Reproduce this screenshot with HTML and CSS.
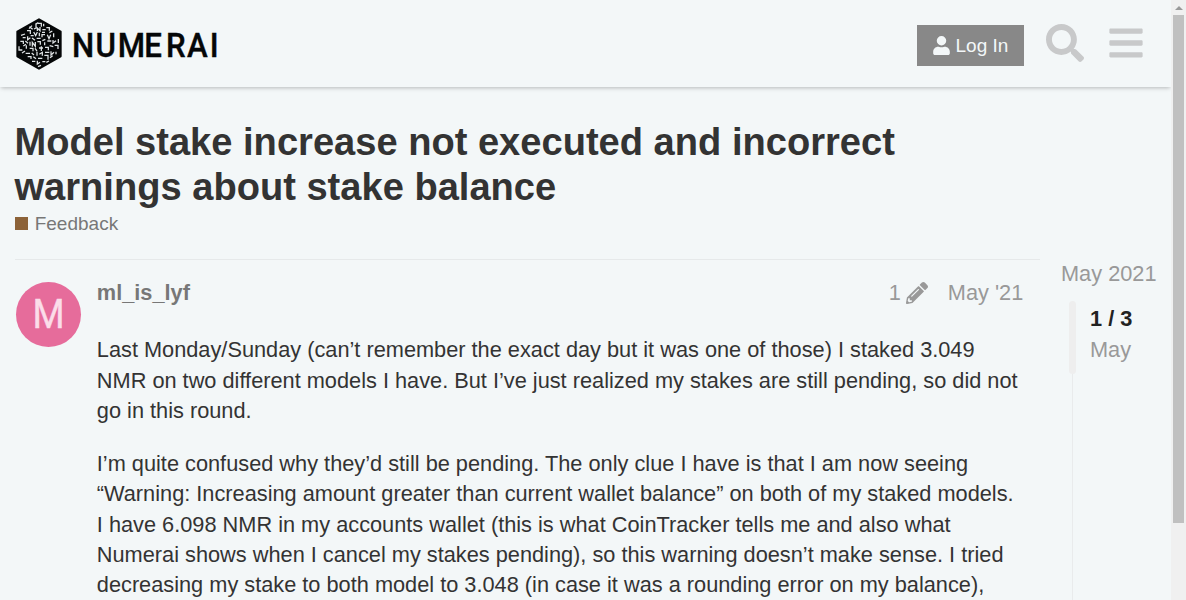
FILE: index.html
```
<!DOCTYPE html>
<html lang="en">
<head>
<meta charset="utf-8">
<title>Model stake increase not executed and incorrect warnings about stake balance</title>
<link rel="stylesheet" href="styles.css">
</head>
<body>
<div class="page">
  <header class="header">
    <a class="brand">
      <svg class="mark" viewBox="0 0 138 156" aria-hidden="true">
        <path d="M69 4 134 41V115L69 152 4 115V41Z" fill="#050708" stroke="#050708" stroke-width="6" stroke-linejoin="round"/>
        <path class="runes" d="M58 19l9-5M60 28V18M66 16h10v10M83 17v8M48 23l-9 9M40 26l10 8M54 33l8-4M64 39V30l8 8V27M79 35h10M91 29h9v9M100 44l9-5M33 38h10v10M44 53h9M53 42l6 11 5-11M70 44v11M78 43h9M87 50h-9v8M94 50l5 12 5-12M113 46v12M15 52l12-4M20 59h9M35 55v10l8-6M48 60l9 7M62 61h12M13 70h9v8M28 69l8 7M42 71v12M49 86V73l9 12V72M64 71h9v9M79 68l9-4M86 73v9M94 69h12M111 66v9l9-7M127 63v12M9 85v11h10M22 84l8-5M31 92V82M41 91h10v9M57 91l6 8M69 90h12M76 85v14M87 88h10v9M101 83l11 3M116 82h10v11M18 105l9-6M29 106h13M47 105l7 6M63 101v12M70 109l9-6v10M87 103h13M105 100v11l9-8M120 101v8M35 116h10v7M52 116l8 6M66 121h13M85 112h11v13M102 119l8-6M48 130h10M64 128v10l8-5M79 131h9M91 133l8-4M66 146l9-4"/>
      </svg>
      <svg class="wordmark" viewBox="0 0 160 44" role="img" aria-label="NUMERAI"><text class="wordmark-text" transform="scale(.92 1)" x="2.200 27.700 51.800 80.600 104.300 127.200 151.900" y="34">NUMERAI</text></svg>
    </a>
    <div class="tools">
      <button class="login"><svg class="user-icon" viewBox="0 0 448 512"><path fill="currentColor" d="M224 256a128 128 0 1 0 0-256 128 128 0 0 0 0 256zm90 32h-17a174 174 0 0 1-146 0h-17C60 288 0 348 0 422v42c0 27 21 48 48 48h352c27 0 48-21 48-48v-42c0-74-60-134-134-134z"/></svg><span>Log In</span></button>
      <svg class="search-icon" viewBox="0 0 512 512"><path fill="currentColor" d="M505 442.700 405.300 343c-4.500-4.500-10.600-7-17-7H372c27.600-35.300 44-79.700 44-128C416 93.100 322.900 0 208 0S0 93.100 0 208s93.100 208 208 208c48.300 0 92.700-16.400 128-44v16.300c0 6.400 2.500 12.500 7 17l99.700 99.700c9.400 9.400 24.600 9.400 33.900 0l28.300-28.300c9.400-9.400 9.400-24.600.1-34zM208 336c-70.700 0-128-57.200-128-128 0-70.700 57.200-128 128-128 70.700 0 128 57.200 128 128 0 70.700-57.200 128-128 128z"/></svg>
      <svg class="menu-icon" viewBox="0 0 448 512"><path fill="currentColor" d="M16 132h416c8.800 0 16-7.200 16-16V76c0-8.800-7.200-16-16-16H16C7.200 60 0 67.200 0 76v40c0 8.800 7.200 16 16 16zm0 160h416c8.800 0 16-7.200 16-16v-40c0-8.800-7.200-16-16-16H16c-8.800 0-16 7.200-16 16v40c0 8.800 7.200 16 16 16zm0 160h416c8.800 0 16-7.200 16-16v-40c0-8.800-7.200-16-16-16H16c-8.800 0-16 7.200-16 16v40c0 8.800 7.200 16 16 16z"/></svg>
    </div>
  </header>
  <main class="main">
    <h1 class="title">Model stake increase not executed and incorrect<br>warnings about stake balance</h1>
    <div class="category"><span class="swatch"></span><span>Feedback</span></div>
    <div class="topic">
      <article class="post">
        <div class="avatar"><span>M</span></div>
        <div class="content">
          <div class="meta">
            <span class="author">ml_is_lyf</span>
            <span class="edits">1<svg class="pencil" viewBox="0 0 512 512"><path fill="currentColor" d="M497.900 142.100l-46.100 46.100c-4.700 4.700-12.300 4.700-17 0l-111-111c-4.700-4.700-4.700-12.300 0-17l46.100-46.100c18.700-18.700 49.100-18.700 67.900 0l60.100 60.100c18.800 18.700 18.800 49.100 0 67.900zM284.200 99.800L21.600 362.400.4 483.900c-2.900 16.400 11.400 30.600 27.800 27.800l121.500-21.300 262.600-262.600c4.700-4.700 4.700-12.300 0-17l-111-111c-4.800-4.700-12.400-4.700-17.100 0zM124.100 339.900c-5.500-5.500-5.500-14.300 0-19.800l154-154c5.500-5.500 14.300-5.500 19.800 0s5.500 14.300 0 19.800l-154 154c-5.500 5.500-14.300 5.500-19.800 0zM88 424h48v36.300l-64.500 11.300-31.100-31.100L51.700 376H88v48z"/></svg></span>
            <span class="date">May '21</span>
          </div>
          <p class="text">Last Monday/Sunday (can’t remember the exact day but it was one of those) I staked 3.049<br>NMR on two different models I have. But I’ve just realized my stakes are still pending, so did not<br>go in this round.</p>
          <p class="text">I’m quite confused why they’d still be pending. The only clue I have is that I am now seeing<br>“Warning: Increasing amount greater than current wallet balance” on both of my staked models.<br>I have 6.098 NMR in my accounts wallet (this is what CoinTracker tells me and also what<br>Numerai shows when I cancel my stakes pending), so this warning doesn’t make sense. I tried<br>decreasing my stake to both model to 3.048 (in case it was a rounding error on my balance),</p>
        </div>
      </article>
      <aside class="timeline">
        <span class="start">May 2021</span>
        <div class="track">
          <div class="handle"></div>
          <div class="position"><b>1 / 3</b><span>May</span></div>
        </div>
      </aside>
    </div>
  </main>
</div>
<div class="scrollbar"><span class="arrow"></span><span class="thumb"></span></div>
</body>
</html>
```
FILE: styles.css
```
* { box-sizing: border-box; }
body {
  margin: 0;
  height: 600px;
  display: flex;
  overflow: hidden;
  background: #f3f7f8;
  color: #333;
  font: 21.75px/30.4px "Liberation Sans", Arial, sans-serif;
}
.page { width: 1171px; height: 600px; overflow: hidden; }
.header {
  height: 87px;
  padding: 0 28px 0 15px;
  display: flex;
  justify-content: space-between;
  box-shadow: 0 2px 4px -1px rgba(0, 0, 0, .25);
}
.brand { display: flex; padding: 18px 0 0 1px; }
.mark { width: 46px; height: 52px; }
.runes { fill: none; stroke: #dfe3e5; stroke-width: 3.8; }
.wordmark { width: 160px; height: 44px; margin: 5px 0 0 8px; overflow: visible; }
.wordmark-text { font: 500 34px Roboto, "Liberation Sans", sans-serif; fill: #050708; stroke: #050708; stroke-width: .4; }
.tools { display: flex; color: #c8c9ca; }
.login {
  width: 107px;
  height: 41px;
  margin-top: 25px;
  padding: 0 0 0 16px;
  border: 0;
  display: flex;
  align-items: center;
  gap: 5.5px;
  background: #888;
  color: #f3f7f8;
  font: 19px "Liberation Sans", Arial, sans-serif;
}
.user-icon { width: 17px; height: 19px; }
.search-icon { width: 38px; height: 38px; margin: 24px 0 0 22px; }
.menu-icon { width: 34px; height: 38px; margin: 24px 0 0 25px; }
.main { padding: 33px 15px 0; }
.title { margin: 0; font-size: 38.1px; line-height: 45px; margin-left: -0.5px; }
.category {
  display: flex;
  align-items: center;
  gap: 6.7px;
  height: 27px;
  font-size: 19px;
  color: #777;
}
.category span:last-child { padding-top: 1px; }
.swatch { width: 13px; height: 13px; background: #8c6238; }
.topic { display: flex; margin-top: 22px; }
.post {
  width: 1025px;
  height: 341px;
  flex: none;
  padding: 22px 0 0 1px;
  display: flex;
  gap: 16px;
  border-top: 1px solid #e6e9ea;
}
.avatar {
  width: 65px;
  height: 65px;
  flex: none;
  border-radius: 50%;
  display: flex;
  align-items: center;
  justify-content: center;
  background: #e66c9b;
  color: #fbdde9;
  font: 400 40px/67px Roboto, sans-serif;
  -webkit-text-stroke: .4px #fbdde9;
}
.avatar span { transform: scaleX(.92); }
.content { flex: none; width: 927px; white-space: nowrap; margin-left: -0.2px; }
.meta { display: flex; height: 22px; line-height: 22px; color: #999; }
.author { flex: 1; font-weight: 700; color: #777; }
.edits { display: flex; gap: 5px; margin-right: 20px; }
.pencil { width: 22px; height: 22px; }
.date { width: 76px; }
.text { margin: 31.4px 0 0; }
.text + .text { margin-top: 22.2px; }
.timeline { padding-left: 21px; color: #999; white-space: nowrap; }
.start { display: block; height: 42px; line-height: 29px; }
.track { margin-left: 8px; height: 300px; display: flex; gap: 14px; background: linear-gradient(#e9ebec, #e9ebec) 3px 0 / 1px 100% no-repeat; }
.handle { width: 7px; height: 73px; border-radius: 4px; background: #eee; }
.position { display: flex; flex-direction: column; line-height: 31px; padding-top: 2px; }
.position b { color: #222; }
.scrollbar { width: 15px; height: 600px; background: #f0f0f0; display: flex; flex-direction: column; align-items: center; padding-top: 6px; }
.arrow { border: 4px solid transparent; border-top: 0; border-bottom-color: #999; }
.thumb { width: 11px; height: 508px; margin-top: 5px; background: #c0c0c0; }
```
